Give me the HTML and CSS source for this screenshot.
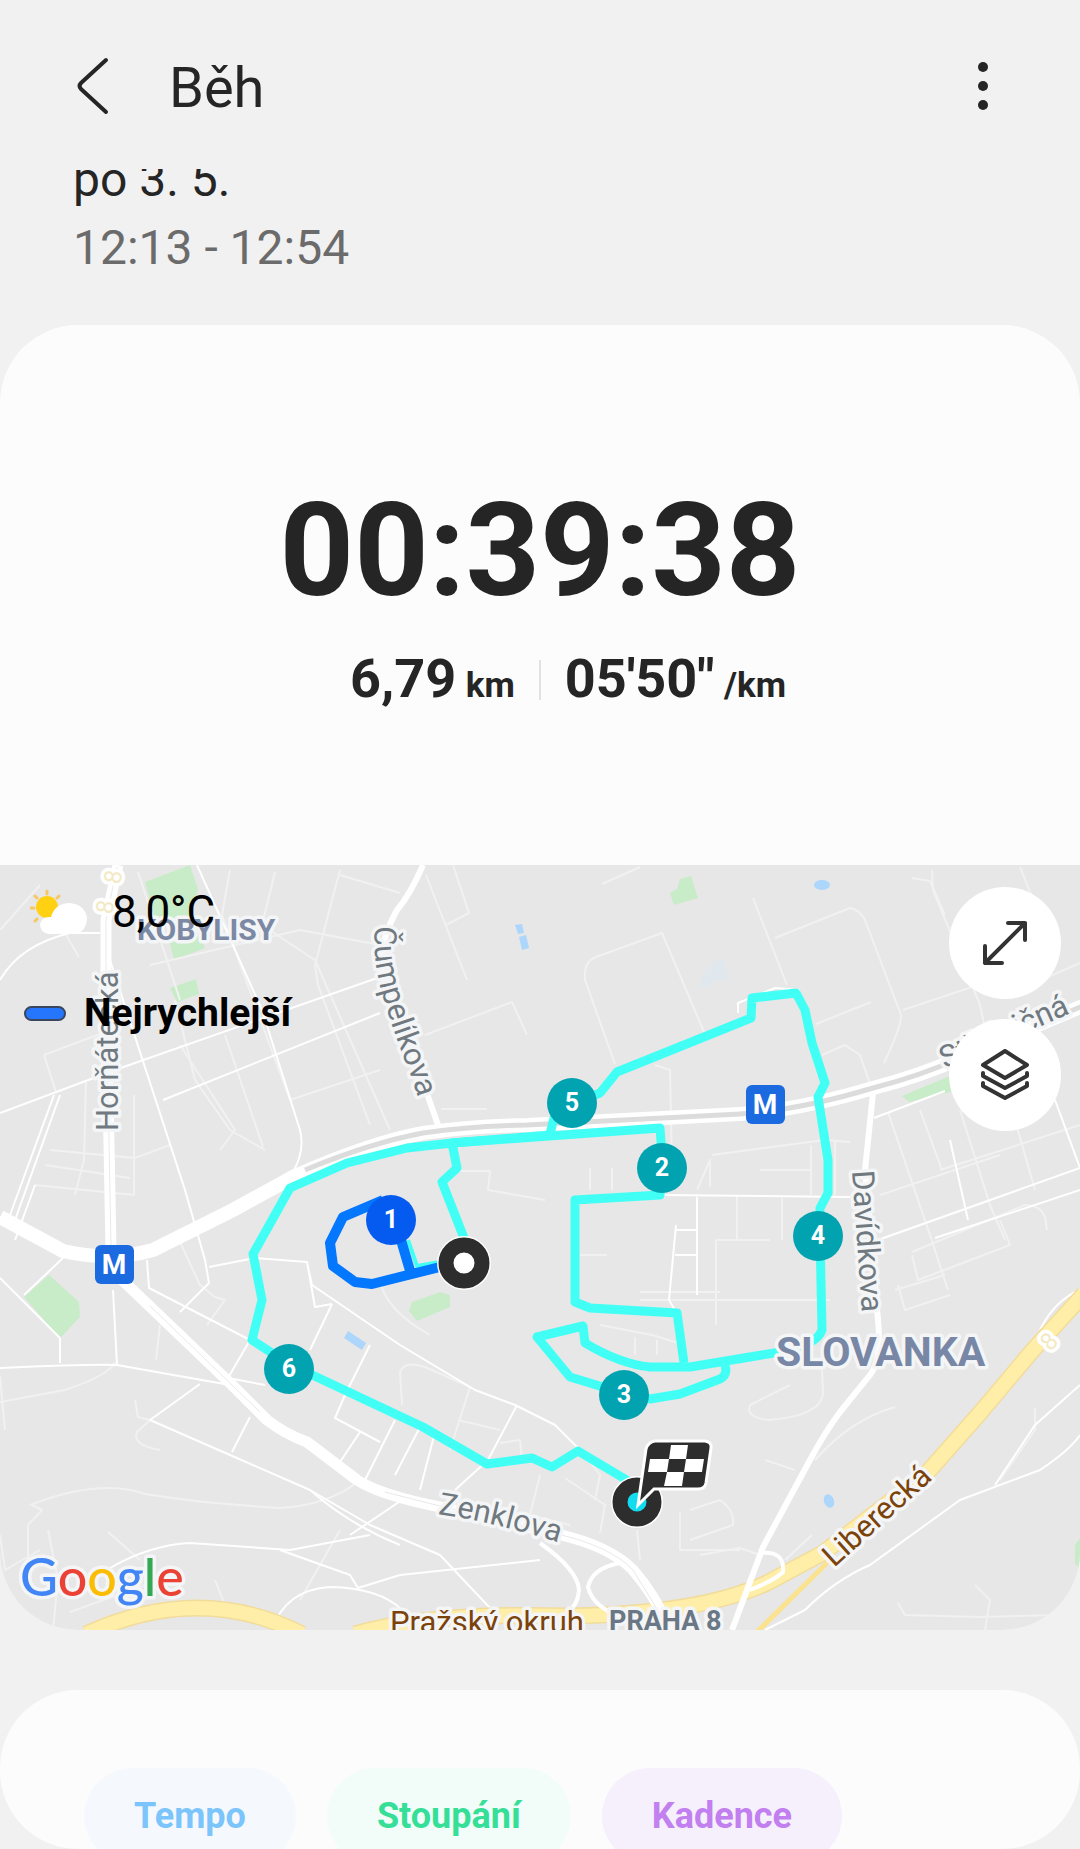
FILE: index.html
```html
<!DOCTYPE html>
<html lang="cs">
<head>
    <meta charset="UTF-8">
    <meta name="viewport" content="width=device-width, initial-scale=1.0">
    <title>Běh</title>
    <link rel="stylesheet" href="styles.css">
</head>
<body>
<div class="page">
  <header class="header">
    <button class="icon_button" type="button" aria-label="Zpět">
      <svg width="32" height="60" viewBox="0 0 32 60"><path d="M29 4 4 27q-3 3 0 6l25 23"/></svg>
    </button>
    <h1 class="title">Běh</h1>
    <button class="icon_button more" type="button" aria-label="Další možnosti">
      <svg width="12" height="52" viewBox="0 0 12 52"><circle cx="6" cy="7" r="5"/><circle cx="6" cy="26" r="5"/><circle cx="6" cy="45" r="5"/></svg>
    </button>
  </header>

  <div class="date_box">
    <p class="date">po 3. 5.</p>
    <p class="time">12:13 - 12:54</p>
  </div>

  <main class="card">
    <section class="summary">
      <div class="timer">00:39:38</div>
      <div class="stats">
        <div class="stat">6,79 <span class="unit">km</span></div>
        <div class="divider"></div>
        <div class="stat">05'50" <span class="unit">/km</span></div>
      </div>
    </section>

    <section class="map">
      <svg class="map_svg" viewBox="0 865 1080 765" role="img" aria-label="Mapa trasy">
        <defs>
          <path id="cumpel" d="M375 926Q372 960 384 1000Q394 1034 408 1068L426 1120"/>
          <path id="zenklova" d="M438 1514Q500 1523 576 1548"/>
        </defs>
        <rect class="land" y="865" width="1080" height="765"/>

        <!-- parks and water -->
        <g class="park">
          <path d="M145 882 190 865 198 889 188 925 157 925Z"/>
          <path d="M170 943 200 936 205 948 174 960ZM170 988 196 979 199 994 177 1002Z"/>
          <path d="M670 893 677 889 680 879 691 876 698 898 674 905Z"/>
          <path d="M24 1297 49 1275 79 1302 80 1317 60 1338Z"/>
          <path d="M409 1311 412 1302 440 1292 450 1295 450 1307 417 1321Z"/>
          <path d="M902 1096 950 1076 975 1075 975 1086 909 1102Z"/>
          <path d="M1080 1538 1075 1545 1075 1563 1080 1570Z"/>
        </g>
        <g class="water">
          <path d="M515 925 522 924 524 933 518 934ZM519 937 526 935 529 948 522 950Z"/>
          <path d="M348 1331 366 1343 362 1350 344 1338Z"/>
          <ellipse cx="822" cy="885" rx="8" ry="5"/>
          <ellipse cx="829" cy="1501" rx="5" ry="7" transform="rotate(-20 829 1501)"/>
        </g>
        <path class="pond" d="M712 962 722 960 731 977 712 984 700 989 702 977Z"/>

        <!-- paths and side streets -->
        <g class="path">
          <path d="M0 930 40 885M138 872 180 1000M66 935 79 957M44 1055 105 1032M44 1055 56 1092"/>
          <path d="M230 870 222 915 290 1100M275 872 262 925 315 960 390 1130M340 870 315 965 318 985 370 1125"/>
          <path d="M175 1000 195 1080 230 1130 265 1150M180 1045 235 1130 220 1150M225 1035 263 1147"/>
          <path d="M150 965 300 930 380 945M290 1100 380 1070M50 1150 135 1158 170 1145M45 1165 130 1178M35 1185 135 1195M86 1080 84 1160 75 1195M134 1095 134 1195"/>
          <path d="M426 875 467 980M453 865 469 913 446 925M340 875 400 893M602 884 640 867"/>
          <path d="M425 1035 512 1002 527 1035M615 1064 585 980Q583 962 596 957L662 933 704 1032"/>
          <path d="M753 898 787 985M775 938 850 908Q860 910 865 920L901 1015Q902 1025 884 1063M816 1024 871 1002M903 1010 975 986M822 1055 845 1045 860 1055 871 1087"/>
          <path d="M912 878 930 881 945 915M932 870 933 890 980 1005 995 1075M1020 867 1045 930M1030 985 1080 963"/>
          <path d="M441 1109H487M455 1171H490L488 1190 545 1200M590 1168V1190M612 1168V1190M697 1190 710 1160V1187M712 1155 825 1140 850 1142M760 1170H810M811 1145V1195M835 1140V1195"/>
          <path d="M737 1195V1240M782 1198V1240M716 1240H770M716 1240V1325M640 1300H830M640 1292H720M580 1255H607M655 1065 670 1070 672 1170"/>
          <path d="M888 1112 930 1235 948 1290M920 1110 942 1170M960 1110 990 1205 1005 1240M1015 1120 1035 1190M940 1170 1080 1125M880 1195 1000 1155"/>
          <path d="M912 1252 1025 1205Q1040 1205 1045 1217L1047 1230M912 1255 918 1280 1010 1245 1000 1220M895 1290 945 1275M950 1295 905 1310 898 1285"/>
          <path d="M180 1242 200 1285 215 1297 225 1300 207 1325M160 1325 156 1360M0 1402 65 1390Q110 1375 115 1362M0 1376 5 1430M135 1400 138 1417 150 1420 137 1432Q132 1445 160 1450"/>
          <path d="M30 1505Q100 1478 145 1494Q200 1503 280 1508Q330 1505 360 1480M28 1525 42 1510 32 1505M28 1525V1560M48 1530 58 1580 53 1630M108 1532 140 1560"/>
          <path d="M402 1405 400 1372Q404 1360 425 1367L470 1387 450 1450M458 1420 500 1430M500 1443 520 1440 522 1460M590 1462 600 1475 595 1500"/>
          <path d="M540 1475 530 1515 570 1525M565 1478 605 1505 600 1533M637 1530 640 1560M690 1510 720 1500Q735 1510 733 1525L690 1540M680 1512 680 1550 740 1550"/>
          <path d="M750 1405 790 1385M750 1405Q745 1418 770 1420Q825 1415 823 1390L822 1370M765 1460 795 1470M815 1460Q850 1420 895 1407M1035 1408V1430L1000 1480"/>
          <path d="M700 1555 740 1548 760 1555M785 1560 812 1535M898 1603 905 1615 980 1617M975 1585 990 1600 985 1630M980 1617 1060 1615M0 1535 5 1570 40 1550M70 1612 145 1585M215 1580 225 1605M340 1530 300 1600"/>
          <path d="M380 1280Q385 1310 430 1335M600 1325 652 1335 685 1345M657 1340V1355M635 1337V1355"/>
        </g>
        <g class="street">
          <path d="M0 980Q20 945 70 933H100M110 960 185 1190 205 1260 209 1283 180 1312M197 865 262 1010 300 1130Q305 1150 294 1170"/>
          <path d="M0 1113 115 1070 380 977M163 1100 380 1013M60 1095 15 1220M54 1095 10 1215M35 1185 15 1240"/>
          <path d="M0 1278 60 1338M24 1295 63 1258M60 1338V1363M113 1290 117 1365Q90 1364 0 1368M117 1365 230 1385M200 1384 150 1420 310 1490Q350 1525 400 1545"/>
          <path d="M250 1417 232 1452M147 1260 149 1288 250 1340 228 1378 265 1385M209 1267 255 1258 307 1262 315 1307 332 1304M307 1262 312 1285 400 1345 475 1390 515 1405 555 1425 580 1450"/>
          <path d="M332 1304 310 1350M370 1345 345 1395 335 1418 380 1442M360 1432 340 1462M395 1420 365 1480M420 1427 395 1475M435 1432 420 1490M517 1405 488 1460 455 1490"/>
          <path d="M110 1568Q150 1545 190 1543L290 1550 370 1535M280 1550 350 1575 358 1588M310 1490 370 1525 440 1555 490 1608M358 1588 400 1575 540 1560"/>
          <path d="M272 1630Q285 1590 330 1587Q380 1588 402 1610M402 1500 350 1535"/>
          <path d="M660 1195 850 1197M697 1197V1295M675 1230H696M675 1255H696M676 1225 669 1300 675 1310"/>
          <path d="M874 1118 945 1091M1055 1100 1080 1168M878 1240 1080 1168M935 1238 1080 1190M968 1220 950 1140"/>
          <path d="M765 1630 805 1610Q835 1580 870 1565L960 1500 1040 1470Q1070 1450 1080 1435M995 1485 1035 1425 1080 1385M1040 1330Q1055 1300 1080 1290"/>
          <path d="M738 1013V1003L775 988 800 990"/>
        </g>

        <!-- yellow main roads -->
        <g class="highway_edge">
          <path d="M86 1634Q200 1582 302 1634M355 1634Q430 1612 570 1616Q700 1614 767 1583L823 1553 927 1473 980 1413 1033 1350 1084 1294"/>
        </g>
        <g class="highway">
          <path d="M86 1634Q200 1582 302 1634M355 1634Q430 1612 570 1616Q700 1614 767 1583L823 1553 927 1473 980 1413 1033 1350 1084 1294"/>
        </g>
        <path class="highway_small" d="M830 1560 757 1632"/>

        <!-- white main roads -->
        <g class="road">
          <path class="w14" d="M0 1217 63 1251Q110 1262 153 1250L233 1210 293 1177Q370 1143 423 1133Q470 1126 527 1125L740 1114Q800 1110 873 1088Q920 1076 960 1058L1085 1005"/>
          <path class="w12" d="M118 865 106 920 106 985 111 1250"/>
          <path class="w12" d="M118 1276 230 1383 267 1420Q285 1434 307 1442L357 1480Q380 1495 440 1507L557 1534Q610 1546 633 1570Q655 1595 670 1630"/>
          <path class="w6" d="M423 865Q410 895 397 910Q380 940 381 970L407 1037 438 1125"/>
          <path class="w6" d="M873 1093 865 1170 878 1320Q882 1360 870 1375L840 1412Q825 1432 810 1460L763 1547 732 1630"/>
          <path class="w4" d="M540 1543Q578 1570 579 1590Q578 1605 568 1612M620 1563Q592 1568 588 1587Q592 1603 610 1612M760 1553Q785 1550 783 1572Q775 1580 750 1590"/>
        </g>
        <path class="lane_wide" d="M305 1170Q370 1143 423 1133Q470 1126 527 1125L740 1114Q800 1110 873 1088Q920 1076 960 1058L1085 1005"/>
        <path class="lane" d="M117 867 106 920 106 985 111 1245M150 1306 260 1412M385 1492 440 1506 557 1534Q610 1546 633 1570L665 1622"/>

        <!-- map labels -->
        <g class="label">
          <text class="district" x="137" y="940">KOBYLISY</text>
          <text class="district small" x="609" y="1630">PRAHA 8</text>
          <text transform="translate(118 1131) rotate(-90)">Horňátecká</text>
          <text><textPath href="#cumpel">Čumpelíkova</textPath></text>
          <text><textPath href="#zenklova">Zenklova</textPath></text>
          <text transform="translate(852 1171) rotate(86)">Davídkova</text>
          <text transform="translate(945 1069) rotate(-24)">Střelničná</text>
          <text class="brown" transform="translate(834 1568) rotate(-42)">Liberecká</text>
          <text class="brown" x="390" y="1633">Pražský okruh</text>
        </g>
        <g class="road_number">
          <text transform="translate(1050 1352) rotate(-45)">8</text>
          <text transform="translate(120 885) rotate(-80)">8</text>
          <text transform="translate(112 915) rotate(-80)">8</text>
        </g>

        <!-- route -->
        <path class="route" d="M464 1238 442 1182 457 1168 452 1143 660 1128 663 1168 660 1195 575 1200V1302L590 1308 677 1313 684 1363"/>
        <path class="route" d="M725 1365Q728 1375 720 1379L680 1394 650 1399 603 1387 570 1377 537 1337 583 1326 585 1343Q620 1364 650 1367L690 1367 780 1352Q817 1345 822 1330L820 1236 820 1208 828 1193V1160L818 1097 825 1083 812 1043 805 1010 796 993 752 998 751 1018 617 1072 600 1093 573 1103 556 1110 550 1134"/>
        <path class="route" d="M550 1135 452 1143 407 1148 347 1163 290 1188 253 1254 262 1300 252 1340 289 1364 423 1427 487 1464 532 1458 552 1467 578 1451 630 1482"/>
        <path class="route thin" d="M408 1240 417 1266 440 1262"/>
        <path class="route fast" d="M440 1267 372 1284 355 1282 333 1266 330 1243 343 1217 383 1200M401 1240 411 1274"/>
        <text class="big_district" x="776" y="1366">SLOVANKA</text>

        <g class="metro">
          <rect x="95" y="1245" width="39" height="39" rx="6"/><text x="114" y="1274">M</text>
          <rect x="746" y="1085" width="39" height="39" rx="6"/><text x="765" y="1114">M</text>
        </g>
        <g class="marker">
          <circle class="fast_dot" cx="391" cy="1220" r="25"/><text x="391" y="1228">1</text>
          <circle cx="662" cy="1168" r="25"/><text x="662" y="1176">2</text>
          <circle cx="624" cy="1395" r="25"/><text x="624" y="1403">3</text>
          <circle cx="818" cy="1236" r="25"/><text x="818" y="1244">4</text>
          <circle cx="572" cy="1103" r="25"/><text x="572" y="1111">5</text>
          <circle cx="289" cy="1369" r="25"/><text x="289" y="1377">6</text>
        </g>

        <!-- start and finish -->
        <circle class="ring" cx="464" cy="1263" r="27"/>
        <circle class="start" cx="464" cy="1263" r="18"/>
        <circle class="ring" cx="637" cy="1502" r="26"/>
        <circle class="finish" cx="637" cy="1502" r="17"/>
        <path class="flag" d="M655 1441H705Q712 1442 711 1448L706 1483Q705 1489 698 1489H654L638 1505 646 1449Q648 1442 655 1441Z"/>
        <path class="flag_check" d="M671 1445H688L686 1459H669ZM650 1459H669L667 1472H648ZM686 1459H704L702 1472H684ZM667 1472H684L682 1486H664Z"/>

        <text class="google" x="20" y="1596"><tspan class="g_blue">G</tspan><tspan class="g_red">o</tspan><tspan class="g_yellow">o</tspan><tspan class="g_blue">g</tspan><tspan class="g_green">l</tspan><tspan class="g_red">e</tspan></text>
      </svg>

      <div class="map_info">
        <div class="info_row">
          <svg class="weather_icon" width="60" height="50" viewBox="0 0 60 50">
            <path class="rays" d="M17 2V5M5 7 7 9M29 7 27 9M1 19H4M5 32 7 30"/>
            <circle class="sun" cx="17" cy="18" r="11"/>
            <path class="cloud" d="M19 45Q10 44 10 35Q12 27 21 28Q25 14 40 14Q56 16 57 30Q56 44 43 45Z"/>
          </svg>
          <span class="temperature">8,0°C</span>
        </div>
        <div class="info_row">
          <span class="legend_line"></span>
          <span class="legend_text">Nejrychlejší</span>
        </div>
      </div>

      <div class="map_buttons">
        <button class="round_button" type="button" aria-label="Zvětšit mapu">
          <svg width="52" height="52" viewBox="0 0 52 52"><path d="M6 46 46 6M29 6H46V23M6 29V46H23"/></svg>
        </button>
        <button class="round_button" type="button" aria-label="Vrstvy">
          <svg width="52" height="52" viewBox="0 0 52 52"><path d="M26 2 48 16 26 29 4 16ZM4 24V27L26 39 48 27V24M4 34V37L26 49 48 37V34"/></svg>
        </button>
      </div>
    </section>
  </main>

  <section class="chart_card">
    <button class="chip tempo" type="button">Tempo</button>
    <button class="chip climb" type="button">Stoupání</button>
    <button class="chip cadence" type="button">Kadence</button>
  </section>
</div>
</body>
</html>
```

FILE: styles.css
```css
body, html {
  margin: 0;
  height: 100%;
}
body {
  background: #f1f1f1;
  color: #252525;
  font-family: Roboto, "Liberation Sans", sans-serif;
}
h1, p {
  margin: 0;
}
button {
  padding: 0;
  border: none;
  background: none;
  font-family: inherit;
}
.page {
  display: flex;
  flex-direction: column;
  height: 100vh;
  overflow: hidden;
}

/* header */
.header {
  display: flex;
  flex: none;
  align-items: center;
  box-sizing: border-box;
  height: 169px;
  padding: 2px 91px 0 77px;
}
.icon_button {
  display: flex;
}
.icon_button path {
  fill: none;
  stroke: #252525;
  stroke-width: 4;
  stroke-linecap: round;
}
.icon_button circle {
  fill: #252525;
}
.title {
  margin-left: 60px;
  padding-top: 4px;
  font-size: 56px;
  font-weight: 400;
}
.more {
  margin-left: auto;
}
.date_box {
  display: flex;
  flex: none;
  flex-direction: column;
  justify-content: flex-end;
  height: 113px;
  padding: 0 73px 43px;
  overflow: hidden;
  font-size: 48px;
  line-height: 68px;
}
.time {
  color: #6b6b6b;
}

/* summary */
.card {
  flex: none;
  overflow: hidden;
  border-radius: 78px;
  background: #fcfcfc;
}
.summary {
  display: flex;
  flex-direction: column;
  align-items: center;
  height: 380px;
  padding-top: 160px;
}
.timer {
  font-size: 130px;
  font-weight: 700;
  line-height: 132px;
}
.stats {
  display: flex;
  align-items: center;
  gap: 24px;
  margin: 30px 0 0 56px;
}
.stat {
  font-size: 54px;
  font-weight: 700;
  line-height: 64px;
}
.unit {
  margin-left: -4px;
  font-size: 35px;
}
.divider {
  width: 2px;
  height: 40px;
  margin-bottom: 6px;
  background: #e2e2e2;
}

/* map */
.map {
  position: relative;
}
.map_svg {
  display: block;
  width: 100%;
}
.land { fill: #e7e7e7; }
.park { fill: #c8ecc7; }
.water { fill: #acd6fb; }
.pond { fill: #e1e8ed; }
.path, .street, .road, .highway, .highway_edge {
  fill: none;
  stroke: #fff;
  stroke-linejoin: round;
}
.path {
  stroke: #f1f1f1;
  stroke-width: 2;
}
.street {
  stroke-width: 2;
}
.w4 { stroke-width: 4; }
.w6 { stroke-width: 6; }
.w12 { stroke-width: 11; }
.w14 { stroke-width: 14; }
.highway {
  stroke: #ffeea8;
  stroke-width: 14;
}
.highway_edge {
  stroke: #f2dc9b;
  stroke-width: 17;
}
.highway_small {
  fill: none;
  stroke: #fbe28f;
  stroke-width: 5;
}
.lane, .lane_wide {
  fill: none;
  stroke: #e9e9e9;
  stroke-width: 1;
}
.lane_wide {
  stroke: #dcdcdc;
  stroke-width: 5;
}
.label, .big_district, .google {
  paint-order: stroke;
  stroke: #f4f5f6;
  stroke-width: 7;
  stroke-linejoin: round;
}
.label {
  fill: #6f797f;
  font-size: 31px;
}
.district {
  fill: #7c89a5;
  font-size: 30px;
  font-weight: 700;
}
.small {
  fill: #6a7784;
  font-size: 27px;
}
.brown { fill: #7b4309; }
.big_district {
  fill: #7787a5;
  font-size: 41px;
  font-weight: 700;
}
.road_number {
  fill: #f3e9c4;
  paint-order: stroke;
  stroke: #fff;
  stroke-width: 7;
  font-size: 24px;
}
.route {
  fill: none;
  stroke: #42fff5;
  stroke-width: 9;
  stroke-linejoin: round;
}
.thin { stroke-width: 4; }
.fast {
  stroke: #0477ff;
  stroke-width: 10;
}
.metro rect {
  fill: #1b6ae0;
}
.metro text, .marker text {
  fill: #fff;
  font-weight: 700;
  text-anchor: middle;
}
.metro text { font-size: 28px; }
.marker text { font-size: 25px; }
.marker circle { fill: #02a3b1; }
.marker .fast_dot { fill: #055bf0; }
.ring { fill: #fff; }
.start, .finish {
  fill: #fff;
  stroke: #2d2d2d;
  stroke-width: 15;
}
.finish { fill: #12dcf0; }
.flag {
  fill: #2d2d2d;
  stroke: #fff;
  stroke-width: 3;
}
.flag_check { fill: #fff; }
.google {
  font-family: Lato, Roboto, sans-serif;
  font-size: 52px;
  font-weight: 500;
}
.g_blue { fill: #4285f4; }
.g_red { fill: #ea4335; }
.g_yellow { fill: #fbbc05; }
.g_green { fill: #34a853; }

/* controls over the map */
.map_info {
  position: absolute;
  top: 21px;
  left: 24px;
  color: #000;
}
.info_row {
  display: flex;
  align-items: center;
  height: 52px;
  margin-bottom: 49px;
}
.weather_icon { margin: 4px 22px 0 6px; }
.rays {
  stroke: #f7c766;
  stroke-width: 3;
  stroke-linecap: round;
}
.sun { fill: #ffd112; }
.cloud { fill: #fff; }
.temperature { font-size: 44px; }
.legend_line {
  box-sizing: border-box;
  width: 42px;
  height: 15px;
  margin-right: 18px;
  border: 2px solid #39465d;
  border-radius: 8px;
  background: #2576fc;
}
.legend_text {
  font-size: 39px;
  font-weight: 700;
}
.map_buttons {
  position: absolute;
  top: 22px;
  right: 19px;
  display: grid;
  gap: 20px;
}
.round_button {
  display: flex;
  align-items: center;
  justify-content: center;
  width: 112px;
  height: 112px;
  border-radius: 50%;
  background: #fff;
}
.round_button path {
  fill: none;
  stroke: #333;
  stroke-width: 4;
  stroke-linecap: round;
  stroke-linejoin: round;
}

/* charts */
.chart_card {
  display: flex;
  flex: 1;
  gap: 31px;
  align-items: flex-start;
  min-height: 0;
  margin-top: 60px;
  padding: 78px 84px 0;
  box-sizing: border-box;
  overflow: hidden;
  border-radius: 78px;
  background: #fcfcfc;
}
.chip {
  flex: none;
  height: 96px;
  padding: 0 50px;
  border-radius: 48px;
  font-size: 36px;
  font-weight: 700;
}
.tempo {
  background: #f5f9fe;
  color: #7cc4fc;
}
.climb {
  background: #f2fdf9;
  color: #35df98;
}
.cadence {
  background: #f5f0fb;
  color: #c17ff0;
}
```
